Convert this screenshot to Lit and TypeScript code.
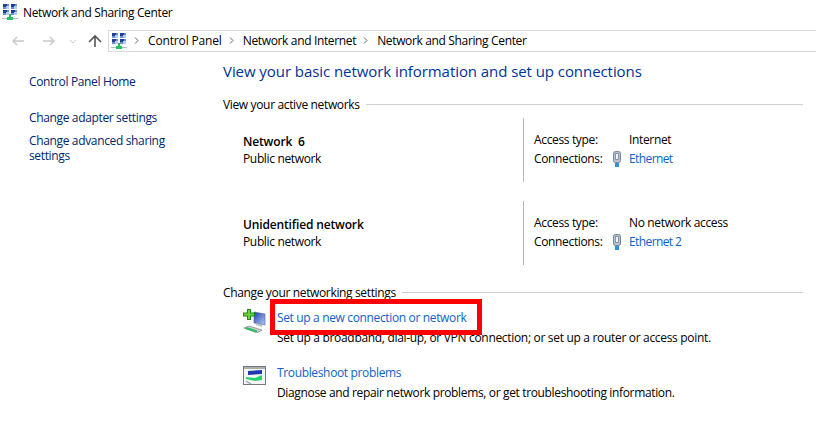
import { css, html, LitElement, svg } from "lit";
import { customElement } from "lit/decorators.js";

const monitor = (x: number, y: number) => svg`
	<rect x=${x} y=${y} width="6" height="5" fill="#6f8fc9" />
	<rect x=${x} y=${y} width="4" height="3" fill="#1f3f96" />
	<rect x=${x + 3} y=${y + 2} width="3" height="3" fill="#b4cdf3" />
`;

const networkIcon = html`
	<svg class="icon" width="16" height="16" viewBox="0 0 16 16" shape-rendering="crispEdges">
		${monitor(1, 0)} ${monitor(9, 0)} ${monitor(1, 6)} ${monitor(9, 6)}
		<rect x="0" y="14" width="16" height="1" fill="#b4bfc4" />
		<rect x="7" y="10" width="2" height="3" fill="#2db45a" />
		<rect x="5" y="13" width="6" height="3" fill="#22c55e" />
	</svg>
`;

const ethernetIcon = html`
	<svg class="eth" width="10" height="16" viewBox="0 0 10 16">
		<rect x="1.5" y="0.5" width="7" height="11" rx="2" fill="#b7c4d3" stroke="#76859a" />
		<rect x="3.5" y="2.5" width="3" height="6" fill="#eef3f8" stroke="#76859a" stroke-width="0.8" />
		<rect x="3" y="12" width="4" height="4" fill="#2f93d8" />
	</svg>
`;

const setupIcon = svg`
	<defs>
		<linearGradient id="screen" x1="0" y1="0" x2="1" y2="1">
			<stop offset="0" stop-color="#1c3db0" />
			<stop offset="1" stop-color="#b4ccf5" />
		</linearGradient>
	</defs>
	<path d="M11 3l11 2v11l-11-2z" fill="url(#screen)" stroke="#4a5f9c" stroke-width="0.6" />
	<path d="M13 14l6 2v2l-6-2z" fill="#b9bfc6" />
	<path d="M1 19l5-2 13 4-5 3z" fill="#c9ced3" stroke="#6d7278" stroke-width="0.6" />
	<path d="M3 19l11 3.4" stroke="#22c25a" stroke-width="2" />
	<rect x="0" y="3.5" width="12" height="4" fill="#1c8a1c" />
	<rect x="4" y="0" width="4" height="11" fill="#1c8a1c" />
	<rect x="1" y="4.5" width="10" height="2" fill="#6fd13c" />
	<rect x="5" y="1" width="2" height="9" fill="#6fd13c" />
`;

const troubleIcon = svg`
	<rect x="0.5" y="2.5" width="22" height="18" fill="#f4f5f6" stroke="#74797d" />
	<rect x="1" y="3" width="21" height="2" fill="#a9aeb3" />
	<path d="M5 7l14-1v4l-14 1z" fill="#2139ad" />
	<path d="M3 13l9 1 7-3v5l-7 1-9-2z" fill="#2cd068" />
	<path d="M3 17l5 3" stroke="#9aa0a5" stroke-width="1.2" />
`;

@customElement("app-root")
export class AppRoot extends LitElement {
	static override styles = css`
		:host {
			display: block;
			position: relative;
			width: 816px;
			height: 438px;
			overflow: hidden;
			background: #fff;
			color: #000;
			font: 12px/15px "Open Sans", sans-serif;
			letter-spacing: -0.35px;
		}

		a {
			color: #0e62c9;
			text-decoration: none;
		}

		.icon {
			display: block;
			flex: none;
		}

		.titlebar {
			display: flex;
			align-items: center;
			gap: 5px;
			height: 24px;
			padding-left: 2px;
		}

		.nav {
			display: flex;
			align-items: center;
			height: 24px;
			margin-top: 5px;
			padding-left: 12px;
		}

		.nav-btns {
			display: flex;
			align-items: center;
			width: 96px;
			flex: none;
		}

		.crumbs {
			display: flex;
			align-items: center;
			flex: 1;
			height: 19px;
			padding: 0 0 1px 2px;
			border: 1px solid #d9d9d9;
			border-right: none;
		}

		.crumbs .sep {
			width: 5px;
			height: 7px;
			margin: 0 9px 0 7px;
			flex: none;
		}

		.crumbs .first {
			letter-spacing: -0.15px;
		}

		.body {
			display: grid;
			grid-template-columns: 223px 580px;
			margin-top: 8px;
		}

		.side {
			display: flex;
			flex-direction: column;
			padding: 13px 40px 0 29px;
		}

		.side a {
			color: #00266e;
		}

		.side a + a {
			margin-top: 21px;
		}

		.side a + a + a {
			margin-top: 8px;
		}

		.main h1 {
			margin: 0;
			font-size: 15px;
			line-height: 20px;
			font-weight: 400;
			color: #003399;
			letter-spacing: -0.065px;
		}

		.group {
			display: flex;
			align-items: center;
			gap: 6px;
		}

		.group::after {
			content: "";
			flex: 1;
			height: 1px;
			background: #cfcfcf;
		}

		.top-group {
			margin-top: 16px;
		}

		.nets {
			margin-top: 6px;
		}

		.net {
			display: grid;
			grid-template-columns: 300px 1fr;
			height: 64px;
		}

		.net + .net {
			margin-top: 19px;
		}

		.net-name {
			padding: 16px 0 0 20px;
		}

		.net-name strong {
			display: block;
			font-weight: 600;
			margin-bottom: 2px;
			white-space: pre;
			letter-spacing: -0.15px;
		}

		.net-info {
			border-left: 1px solid #b9b9b9;
			padding: 12px 0 0 10px;
			display: grid;
			grid-template-columns: 95px 1fr;
			grid-auto-rows: 19px;
			align-content: start;
			align-items: center;
		}

		.conn {
			display: flex;
			align-items: center;
		}

		.conn a {
			letter-spacing: -0.6px;
		}

		.eth {
			flex: none;
			margin-right: 7px;
			margin-left: -17px;
		}

		.settings-group {
			margin-top: 20px;
		}

		.tasks {
			margin-top: 10px;
			display: flex;
			flex-direction: column;
			gap: 20px;
		}

		.task {
			display: grid;
			grid-template-columns: 54px 1fr;
		}

		.task-icon {
			display: flex;
			justify-content: flex-end;
			padding-right: 10px;
			margin-top: -1px;
		}

		.task-text {
			display: flex;
			flex-direction: column;
			gap: 5px;
		}

		.task-text .long {
			letter-spacing: -0.315px;
		}

		.highlight {
			position: absolute;
			left: 270px;
			top: 299px;
			width: 212px;
			height: 36px;
			box-sizing: border-box;
			border: 5px solid #f00;
		}
	`;

	private renderNet(name: string, access: string, conn: string) {
		return html`
			<div class="net">
				<div class="net-name">
					<strong>${name}</strong>
					Public network
				</div>
				<div class="net-info">
					<span>Access type:</span>
					<span>${access}</span>
					<span>Connections:</span>
					<span class="conn">${ethernetIcon}<a href="#">${conn}</a></span>
				</div>
			</div>
		`;
	}

	override render() {
		const sep = html`<svg class="sep" viewBox="0 0 5 7"><path d="M1 0.5L4 3.5 1 6.5" fill="none" stroke="#666" /></svg>`;
		return html`
			<div class="titlebar">${networkIcon}<span>Network and Sharing Center</span></div>
			<div class="nav">
				<div class="nav-btns">
					<svg width="92" height="16" viewBox="0 0 92 16">
						<path d="M1 8h11M5 4L1 8l4 4" fill="none" stroke="#c8c8c8" stroke-width="1.4" />
						<path d="M31 8h11M38 4l4 4-4 4" fill="none" stroke="#c8c8c8" stroke-width="1.4" />
						<path d="M58 7l3 3 3-3" fill="none" stroke="#c8c8c8" />
						<path d="M83 14V3M77 9l6-6 6 6" fill="none" stroke="#555" stroke-width="1.6" />
					</svg>
				</div>
				<div class="crumbs">
					${networkIcon}
					${sep}<span class="first">Control Panel</span>
					${sep}<span>Network and Internet</span>
					${sep}<span>Network and Sharing Center</span>
				</div>
			</div>
			<div class="body">
				<div class="side">
					<a href="#">Control Panel Home</a>
					<a href="#">Change adapter settings</a>
					<a href="#">Change advanced sharing settings</a>
				</div>
				<div class="main">
					<h1>View your basic network information and set up connections</h1>
					<div class="group top-group">View your active networks</div>
					<div class="nets">
						${this.renderNet("Network  6", "Internet", "Ethernet")}
						${this.renderNet("Unidentified network", "No network access", "Ethernet 2")}
					</div>
					<div class="group settings-group">Change your networking settings</div>
					<div class="tasks">
						<div class="task">
							<div class="task-icon"><svg class="icon" width="24" height="24" viewBox="0 0 24 24">${setupIcon}</svg></div>
							<div class="task-text"><a href="#">Set up a new connection or network</a>
							<span class="long">Set up a broadband, dial-up, or VPN connection; or set up a router or access point.</span></div>
						</div>
						<div class="task">
							<div class="task-icon"><svg class="icon" width="24" height="24" viewBox="0 0 24 24">${troubleIcon}</svg></div>
							<div class="task-text"><a href="#">Troubleshoot problems</a>
							<span>Diagnose and repair network problems, or get troubleshooting information.</span></div>
						</div>
					</div>
				</div>
			</div>
			<div class="highlight"></div>
		`;
	}
}

declare global {
	interface HTMLElementTagNameMap {
		"app-root": AppRoot;
	}
}
